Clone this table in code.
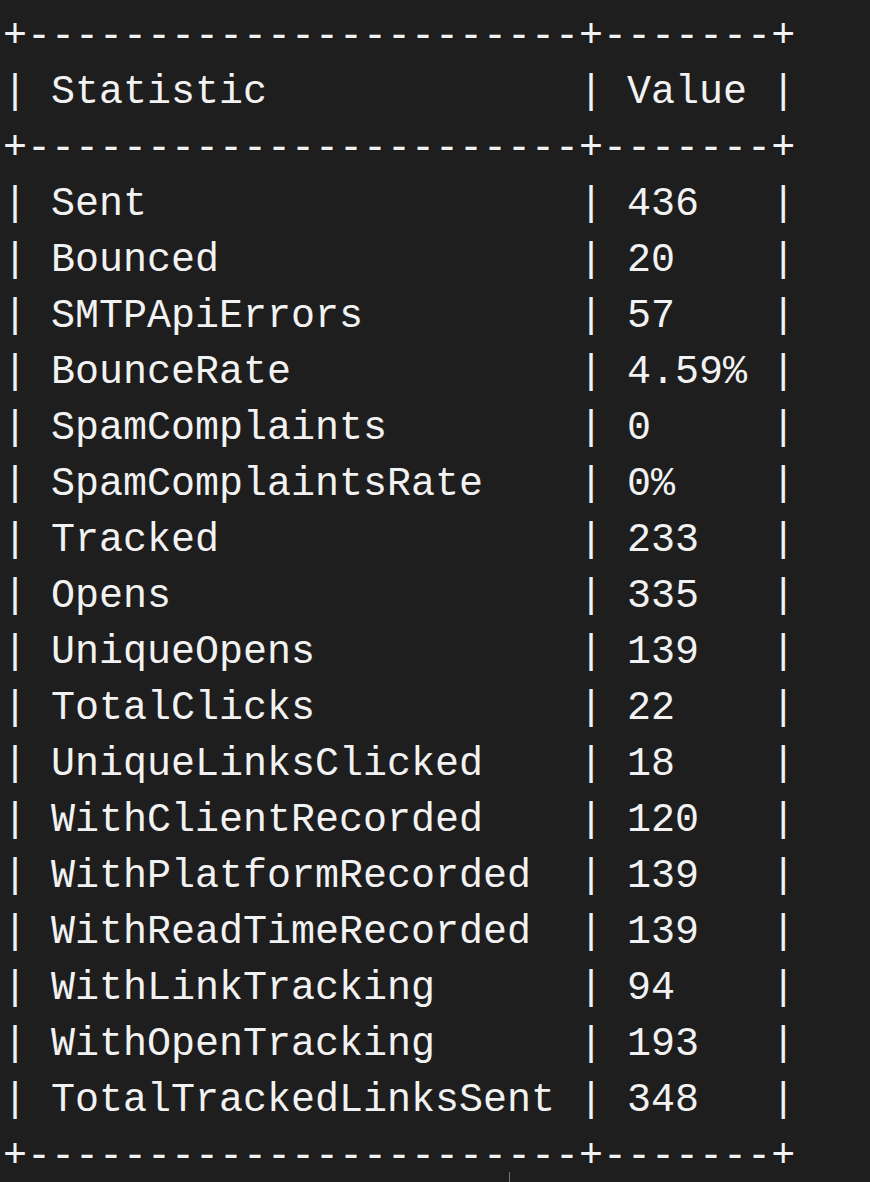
import React from 'react'

const stats: [string, string][] = [
  ['Sent', '436'],
  ['Bounced', '20'],
  ['SMTPApiErrors', '57'],
  ['BounceRate', '4.59%'],
  ['SpamComplaints', '0'],
  ['SpamComplaintsRate', '0%'],
  ['Tracked', '233'],
  ['Opens', '335'],
  ['UniqueOpens', '139'],
  ['TotalClicks', '22'],
  ['UniqueLinksClicked', '18'],
  ['WithClientRecorded', '120'],
  ['WithPlatformRecorded', '139'],
  ['WithReadTimeRecorded', '139'],
  ['WithLinkTracking', '94'],
  ['WithOpenTracking', '193'],
  ['TotalTrackedLinksSent', '348'],
]

export default function App() {
  const w1 = 21
  const w2 = 5
  const sep = '+' + '-'.repeat(w1 + 2) + '+' + '-'.repeat(w2 + 2) + '+'
  const row = (a: string, b: string) => `| ${a.padEnd(w1)} | ${b.padEnd(w2)} |`

  const lines = [sep, row('Statistic', 'Value'), sep, ...stats.map(([k, v]) => row(k, v)), sep]

  return (
    <div className="relative w-[870px] h-[1182px] bg-[#1e1e1e] overflow-hidden">
      <pre
        className="pl-[3px] pt-[9px] text-[40px] leading-[56px] text-[#f2f2f2] whitespace-pre"
        style={{ fontFamily: '"Liberation Mono", "DejaVu Sans Mono", monospace' }}
      >
        {lines.join('\n')}
      </pre>
      {/* stray cursor tick */}
      <div className="absolute left-[509px] top-[1172px] w-px h-[10px] bg-[#777]" />
    </div>
  )
}
